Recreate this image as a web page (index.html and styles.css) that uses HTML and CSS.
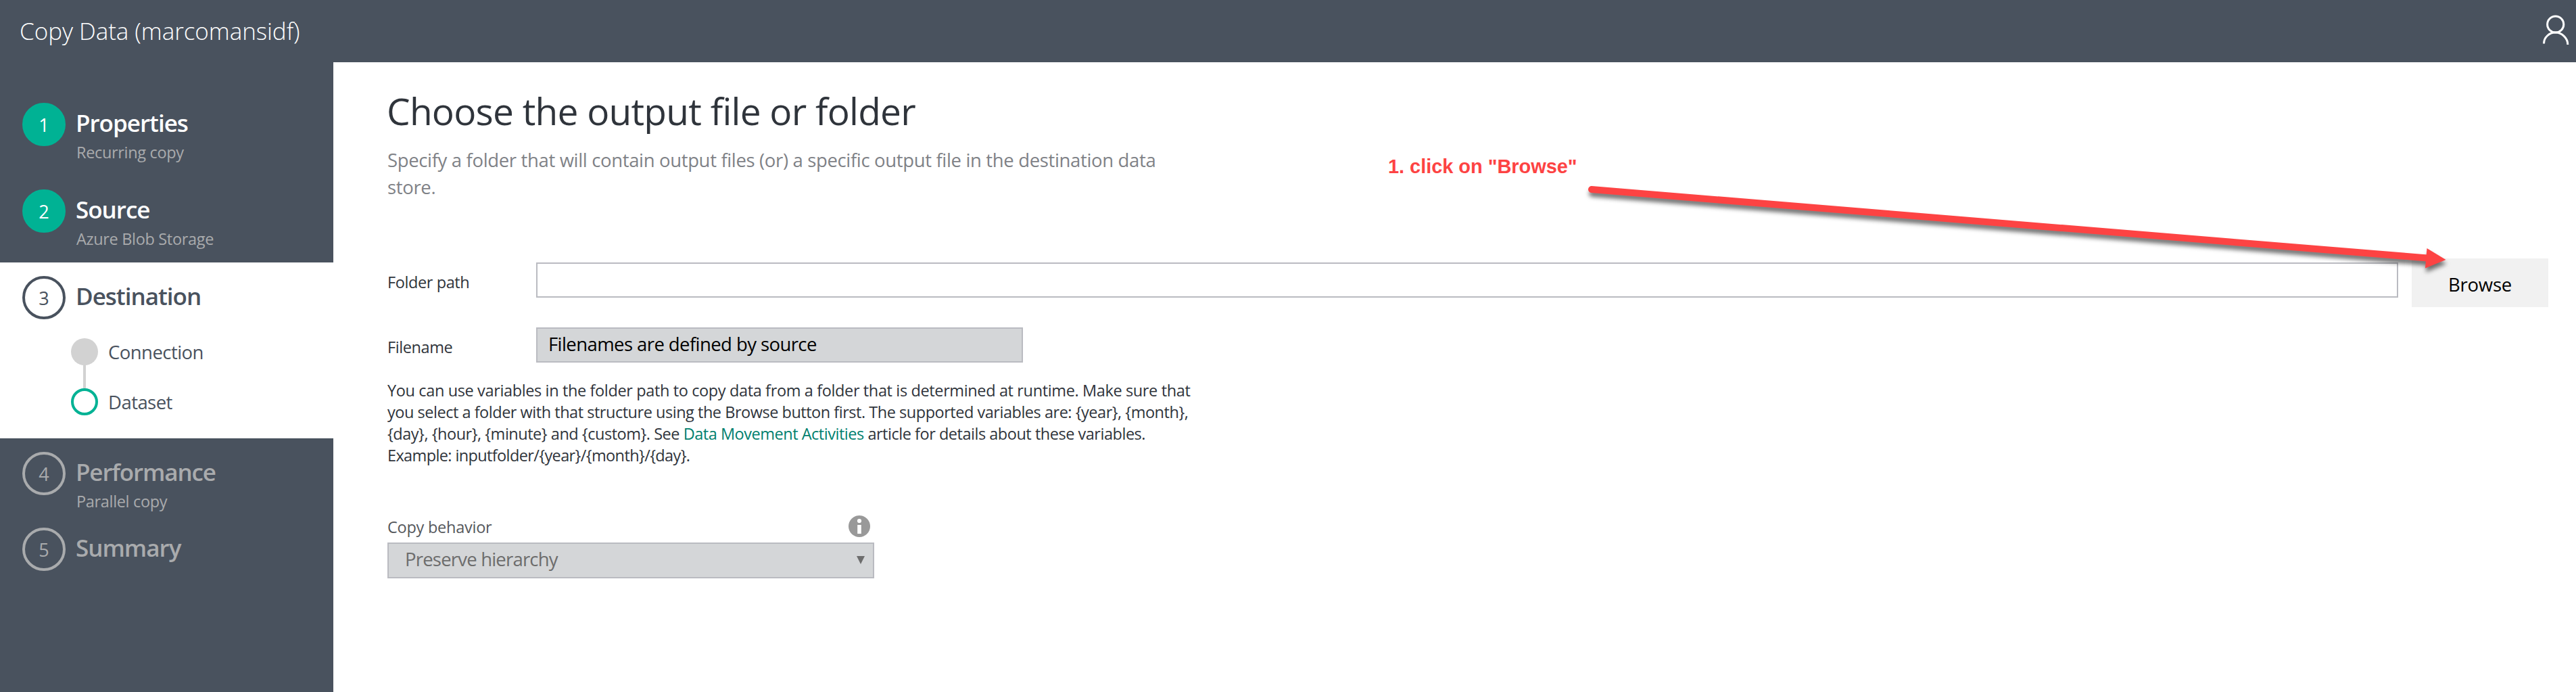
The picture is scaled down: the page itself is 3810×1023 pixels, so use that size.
FILE: index.html
```html
<!DOCTYPE html>
<html lang="en">
<head>
<meta charset="utf-8">
<title>Copy Data</title>
<link rel="stylesheet" href="styles.css">
</head>
<body>
<header class="topbar">
  <span class="topbar-title">Copy Data (marcomansidf)</span>
  <svg class="user-icon" width="40" height="48" viewBox="0 0 40 48" fill="none" stroke="#fff" stroke-width="3"><circle cx="19.7" cy="16" r="12.1"/><path d="M2.5 44.500C2.5 35 10.500 28.100 19.700 28.100S37.800 36 37.800 46"/></svg>
</header>
<div class="layout">
  <nav class="steps">
    <section class="step done">
      <span class="num">1</span>
      <div><h2>Properties</h2><p>Recurring copy</p></div>
    </section>
    <section class="step done">
      <span class="num">2</span>
      <div><h2>Source</h2><p>Azure Blob Storage</p></div>
    </section>
    <section class="step current">
      <span class="num">3</span>
      <h2>Destination</h2>
      <ul class="substeps">
        <li><i class="dot"></i><span>Connection</span></li>
        <li><i class="dot open"></i><span>Dataset</span></li>
      </ul>
    </section>
    <section class="step todo four">
      <span class="num">4</span>
      <div><h2>Performance</h2><p>Parallel copy</p></div>
    </section>
    <section class="step todo">
      <span class="num">5</span>
      <div><h2>Summary</h2></div>
    </section>
  </nav>
  <main class="content">
    <h1>Choose the output file or folder</h1>
    <p class="lead">Specify a folder that will contain output files (or) a specific output file in the destination data<br>store.</p>
    <div class="field folder">
      <label>Folder path</label>
      <div class="input"></div>
      <button class="browse">Browse</button>
    </div>
    <div class="field file">
      <label>Filename</label>
      <div class="input disabled">Filenames are defined by source</div>
    </div>
    <p class="hint">You can use variables in the folder path to copy data from a folder that is determined at runtime. Make sure that<br><span class="tight">you select a folder with that structure using the Browse button first. The supported variables are: {year}, {month},<br>{day}, {hour}, {minute} and {custom}. See <a>Data Movement Activities</a> article for details about these variables.</span><br><span class="tighter">Example: inputfolder/{year}/{month}/{day}.</span></p>
    <div class="behavior">
      <div class="behavior-head">
        <span>Copy behavior</span>
        <svg width="32" height="32" viewBox="0 0 32 32"><circle cx="16" cy="16" r="16" fill="#999"/><circle cx="16" cy="8" r="3.1" fill="#fff"/><path d="M13.200 14h5.600v13h-5.600z" fill="#fff"/></svg>
      </div>
      <div class="select"><span>Preserve hierarchy</span><i class="caret"></i></div>
    </div>
  </main>
</div>
<div class="callout">1. click on "Browse"</div>
<svg class="arrow" width="1300" height="150" viewBox="0 0 1300 150"><path d="M14 20L1250 121.5" stroke="#fd4343" stroke-width="10" stroke-linecap="round"/><path d="M1249.500 107L1277.500 124L1247 136.500Z" fill="#fd4343"/></svg>
</body>
</html>
```
FILE: styles.css
```css
* { box-sizing: border-box; margin: 0; padding: 0; }
body { width: 3810px; height: 1023px; overflow: hidden; position: relative; background: #fff; font-family: "Open Sans", "Noto Sans", sans-serif; font-size: 23.5px; color: #2f343b; }
.topbar { height: 92px; padding: 0 10px 0 29px; background: #49525e; color: #fff; display: flex; justify-content: space-between; align-items: flex-start; }
.topbar-title { font-size: 35px; font-weight: 300; line-height: 91px; letter-spacing: -.05px; }
.user-icon { margin-top: 20px; }
.layout { display: flex; height: 931px; }
.steps { width: 493px; background: #49525e; padding-top: 40px; flex: none; }
.step { display: grid; grid-template-columns: 64px 1fr; column-gap: 15px; height: 128px; padding: 20px 33px 0; align-content: start; align-items: start; color: #fff; }
.step h2 { font-size: 35px; font-weight: 600; line-height: 60px; letter-spacing: -1px; }
.step p { font-size: 23.5px; line-height: 30px; margin-top: -2px; padding-left: 1px; color: #a9abad; letter-spacing: -.33px; }
.num { width: 64px; height: 64px; border: 4px solid currentColor; border-radius: 50%; font-size: 27px; line-height: 57px; text-align: center; }
.done .num { background: #00b294; border-color: #00b294; }
.current { height: 260px; background: #fff; color: #49525e; }
.todo { color: #a9abad; }
.four { height: 112px; }
.four h2 { letter-spacing: -1.15px; }
.substeps { grid-column: 1 / 3; list-style: none; padding: 28px 0 0 72px; margin-top: 0; display: flex; flex-direction: column; gap: 34px; }
.substeps li { display: flex; gap: 15px; height: 40px; line-height: 42px; font-size: 27.5px; letter-spacing: -.55px; }
.dot { width: 40px; height: 40px; border-radius: 50%; background: #d2d2d2; position: relative; }
.dot.open { background: #fff; border: 4px solid #00b294; }
.dot:not(.open)::after { content: ""; position: absolute; left: 18px; top: 39px; width: 4px; height: 36px; background: #d2d2d2; }
.content { flex: 1; padding: 40px 41px 0 80px; }
h1 { font-size: 55px; font-weight: 400; line-height: 64px; color: #2f343b; letter-spacing: -.75px; text-indent: -1px; }
.lead { margin-top: 21px; font-size: 27.5px; line-height: 40px; color: #7f8287; letter-spacing: -.35px; }
.field { display: flex; align-items: flex-start; }
.field label { width: 220px; line-height: 32px; letter-spacing: -.4px; }
.folder { margin-top: 85px; height: 72px; }
.folder label { padding-top: 19px; }
.folder .input { flex: 1; margin-top: 6px; }
.input { height: 52px; border: 2px solid #babbc1; font-size: 27.5px; line-height: 46px; color: #000; letter-spacing: -.58px; }
.browse { width: 202px; height: 72px; margin-left: 20px; padding-top: 1px; border: 0; background: #f1f1f1; font: 27.5px/76px "Open Sans", "Noto Sans", sans-serif; letter-spacing: -.25px; color: #000; }
.file { margin-top: 30px; height: 52px; }
.file label { padding-top: 13px; }
.disabled { width: 720px; background: #d4d6d8; padding-left: 16px; }
.hint { margin-top: 25px; line-height: 32px; letter-spacing: -.37px; }
.hint .tight { letter-spacing: -.475px; }
.hint .tighter { letter-spacing: -.62px; }
.hint a { color: #00806e; }
.behavior { width: 720px; margin-top: 73px; color: #55585c; }
.behavior-head { display: flex; justify-content: space-between; height: 40px; padding-right: 6px; line-height: 34px; letter-spacing: -.25px; }
.select { display: flex; justify-content: space-between; height: 53px; border: 2px solid #babbc1; background: #d4d6d8; padding: 0 12px 0 24px; font-size: 27.5px; line-height: 45px; color: #6d6d6d; letter-spacing: -.8px; }
.caret { width: 12px; height: 12px; margin-top: 18px; background: #6d6d6d; clip-path: polygon(0 0, 100% 0, 50% 100%); }
.callout { position: absolute; left: 2053px; top: 230px; font: bold 29px/32px "Liberation Sans", Arial, sans-serif; letter-spacing: -.05px; color: #fd4343; white-space: nowrap; }
.arrow { position: absolute; left: 2340px; top: 260px; filter: drop-shadow(1px 6px 3px rgba(0, 0, 0, .55)); }
```
